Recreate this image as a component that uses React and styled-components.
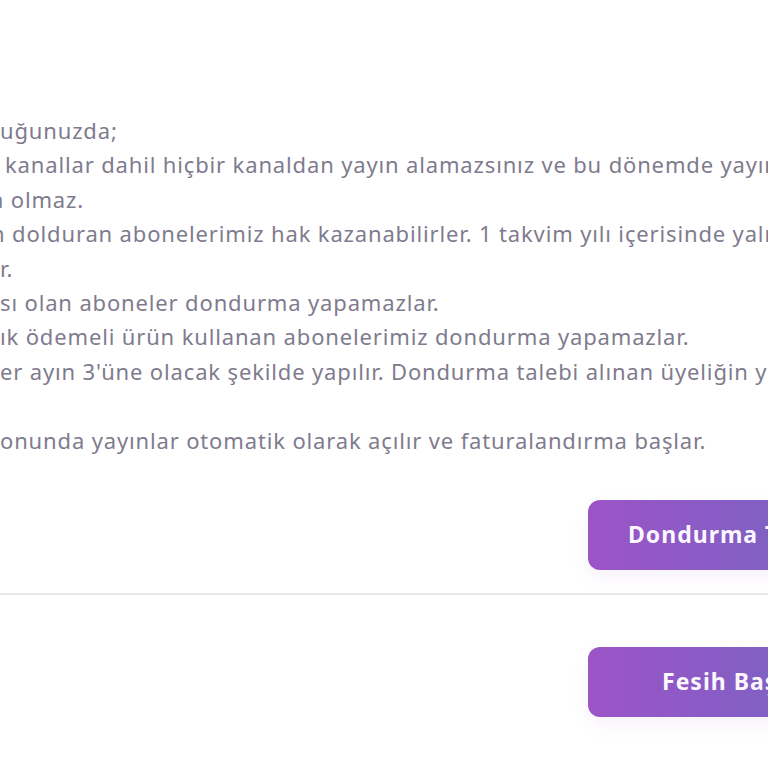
import React from 'react';
import styled, { createGlobalStyle } from 'styled-components';

const GlobalStyle = createGlobalStyle`
  html, body {
    margin: 0;
    padding: 0;
    background: #ffffff;
    overflow: hidden;
  }
  body {
    font-family: "Noto Sans", "Open Sans", Arial, sans-serif;
  }
`;

const Page = styled.div`
  width: 768px;
  height: 768px;
  overflow: hidden;
  padding-top: 113px;
  box-sizing: border-box;
`;

const Rules = styled.div`
  display: flex;
  flex-direction: column;
  color: #7f7b8e;
  font-size: 22px;
  line-height: 34.4px;
  letter-spacing: 0.85px;
`;

const Line = styled.div`
  white-space: nowrap;
  height: 34.4px;
  margin-left: ${p => p.$indent || 0}px;
`;

const Actions = styled.div`
  display: flex;
  justify-content: flex-end;
  margin-right: -120px;
  padding-top: ${p => p.$top}px;
`;

const Button = styled.button`
  width: 300px;
  height: 70px;
  border: none;
  border-radius: 12px;
  background: linear-gradient(90deg, #9c54c6 0%, #8160c4 60%, #7668c4 100%);
  box-shadow: 0 8px 18px rgba(156, 84, 198, 0.08);
  color: #fbf6ff;
  font-family: "Noto Sans", "Open Sans", Arial, sans-serif;
  font-weight: 700;
  font-size: 23px;
  letter-spacing: 1px;
  text-align: left;
  padding: 0 0 2px ${p => p.$pad}px;
  white-space: nowrap;
`;

const Divider = styled.hr`
  border: none;
  height: 2px;
  background: #e7e7e9;
  margin: 23px 0 0;
`;

const lines = [
  { text: 'uğunuzda;', indent: 0 },
  { text: 'kanallar dahil hiçbir kanaldan yayın alamazsınız ve bu dönemde yayın alamazsınız', indent: 5 },
  { text: 'a olmaz.', indent: -9 },
  { text: 'n dolduran abonelerimiz hak kazanabilirler. 1 takvim yılı içerisinde yalnızca bir kez', indent: -9 },
  { text: 'r.', indent: 0 },
  { text: 'sı olan aboneler dondurma yapamazlar.', indent: 0 },
  { text: 'ık ödemeli ürün kullanan abonelerimiz dondurma yapamazlar.', indent: 0 },
  { text: "er ayın 3'üne olacak şekilde yapılır. Dondurma talebi alınan üyeliğin yayınları", indent: 0 },
  { text: '', indent: 0 },
  { text: 'onunda yayınlar otomatik olarak açılır ve faturalandırma başlar.', indent: 0 },
];

export default function App() {
  return (
    <>
      <GlobalStyle />
      <Page>
        <Rules>
          {lines.map((l, i) => (
            <Line key={i} $indent={l.indent}>{l.text}</Line>
          ))}
        </Rules>
        <Actions $top={43}>
          <Button $pad={40}>Dondurma Talebi</Button>
        </Actions>
        <Divider />
        <Actions $top={52}>
          <Button $pad={74}>Fesih Başvurusu</Button>
        </Actions>
      </Page>
    </>
  );
}
